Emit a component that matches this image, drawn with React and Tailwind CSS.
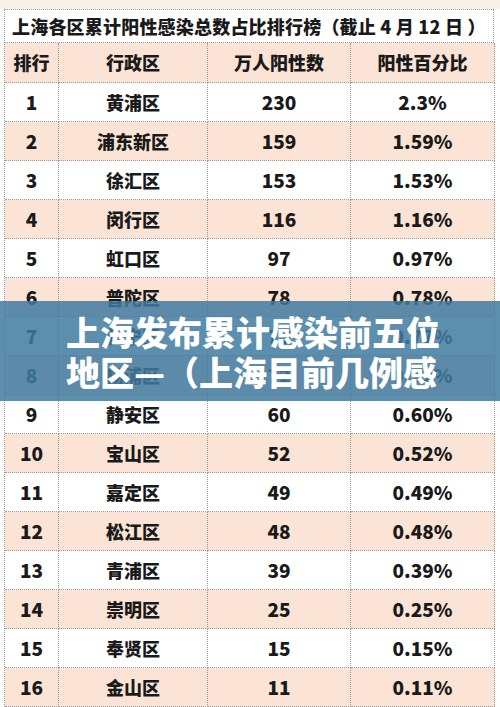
const rows = [
  ["1", "黄浦区", "230", "2.3%"],
  ["2", "浦东新区", "159", "1.59%"],
  ["3", "徐汇区", "153", "1.53%"],
  ["4", "闵行区", "116", "1.16%"],
  ["5", "虹口区", "97", "0.97%"],
  ["6", "普陀区", "78", "0.78%"],
  ["7", "长宁区", "77", "0.77%"],
  ["8", "杨浦区", "72", "0.72%"],
  ["9", "静安区", "60", "0.60%"],
  ["10", "宝山区", "52", "0.52%"],
  ["11", "嘉定区", "49", "0.49%"],
  ["12", "松江区", "48", "0.48%"],
  ["13", "青浦区", "39", "0.39%"],
  ["14", "崇明区", "25", "0.25%"],
  ["15", "奉贤区", "15", "0.15%"],
  ["16", "金山区", "11", "0.11%"],
];

const headers = ["排行", "行政区", "万人阳性数", "阳性百分比"];

const cell =
  "flex items-center justify-center border-r border-b border-dotted border-[#9a9a9a]";

export default function App() {
  return (
    <div
      className="relative h-[707px] w-[500px] overflow-hidden bg-white text-[#1a1a1a]"
      style={{ fontFamily: '"Noto Sans CJK SC", "Noto Sans", sans-serif' }}
    >
      {/* top strip */}
      <div className="h-[9px] bg-[#f6f2e8]" />

      {/* TABLE */}
      <div className="ml-[4px] w-[490px] border-l border-t border-dotted border-[#9a9a9a]">
        <div className="flex h-[33px] items-center border-r border-b border-dotted border-[#9a9a9a] pl-[7px] text-[18px] font-black leading-none tracking-[0.2px]">
          上海各区累计阳性感染总数占比排行榜（截止 4 月 12 日 ）
        </div>

        <div className="grid grid-cols-[54px_149px_143px_144px]">
          {headers.map((h) => (
            <div key={h} className={`${cell} h-[40px] bg-[#fbe4d5] text-[18px] font-black`}>
              {h}
            </div>
          ))}

          {rows.map((r, i) =>
            r.map((v, j) => (
              <div
                key={`${i}-${j}`}
                className={`${cell} h-[39px] font-black ${
                  i % 2 === 1 ? "bg-[#fbe4d5]" : "bg-white"
                } ${j === 1 ? "text-[18px]" : "text-[19px]"}`}
              >
                {v}
              </div>
            ))
          )}
        </div>
      </div>

      {/* OVERLAY BANNER */}
      <div className="absolute left-0 top-[301px] w-full bg-[#3f7aa0]/85 pb-[9px] pl-[66px] pt-[11px]">
        <div className="h-[80px] w-[376px] overflow-hidden text-[34px] font-black leading-[40px] text-white">
          上海发布累计感染前五位地区—（上海目前几例感染者）
        </div>
      </div>
    </div>
  );
}
